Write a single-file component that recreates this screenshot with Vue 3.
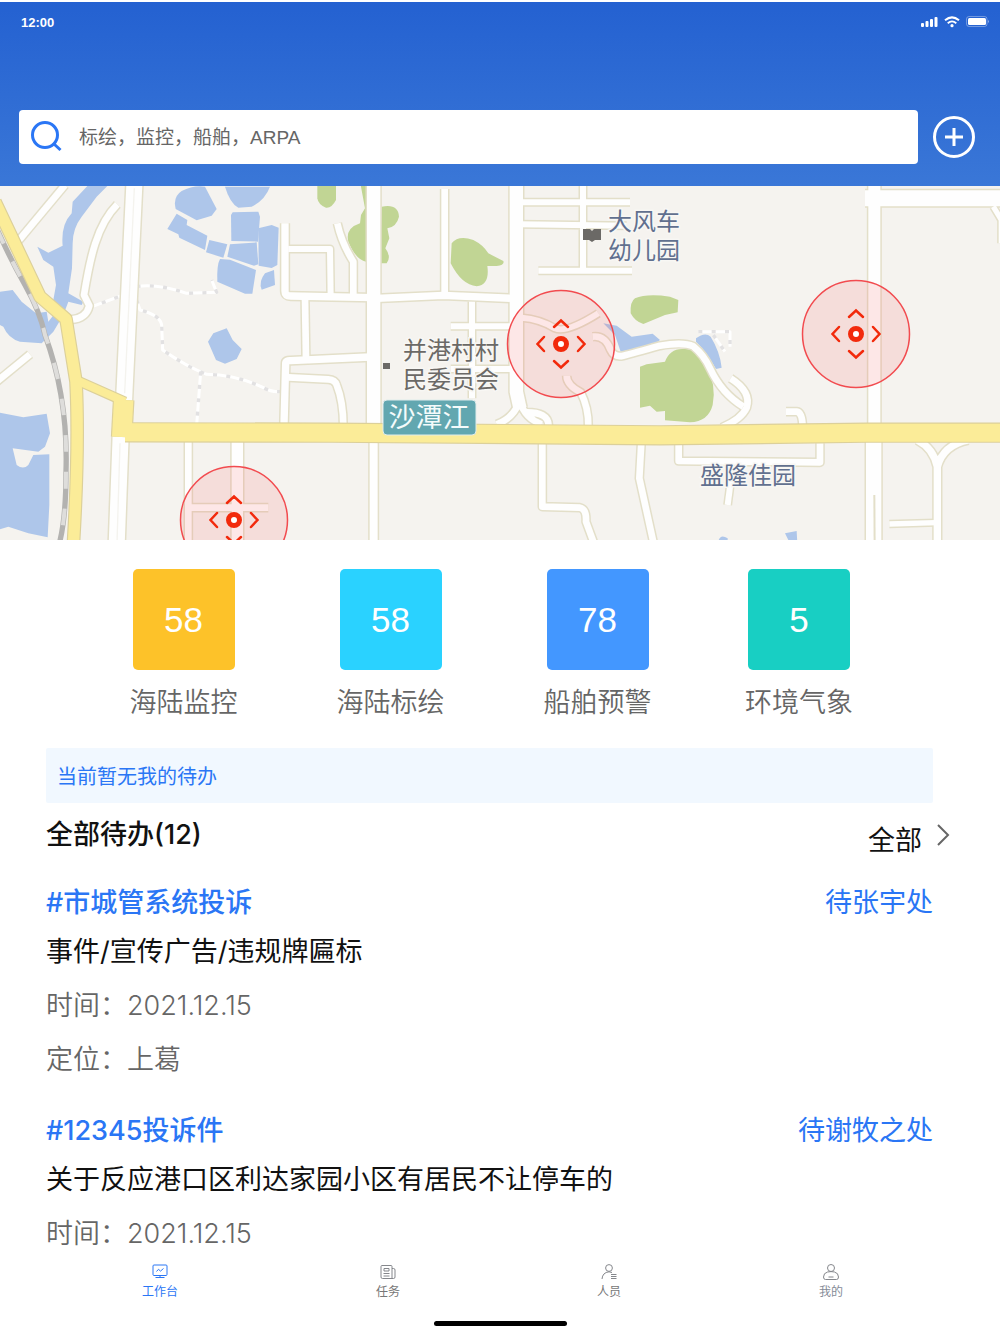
<script setup>
import { ref } from 'vue'

const keyword = ref('')
const activeTab = ref('work')

const stats = [
  { value: 58, label: '海陆监控', tone: 'amber' },
  { value: 58, label: '海陆标绘', tone: 'cyan' },
  { value: 78, label: '船舶预警', tone: 'blue' },
  { value: 5, label: '环境气象', tone: 'teal' }
]

const todos = [
  {
    tag: '#市城管系统投诉',
    handler: '待张宇处',
    title: '事件/宣传广告/违规牌匾标',
    meta: ['时间：2021.12.15', '定位：上葛']
  },
  {
    tag: '#12345投诉件',
    handler: '待谢牧之处',
    title: '关于反应港口区利达家园小区有居民不让停车的',
    meta: ['时间：2021.12.15']
  }
]

const tabs = [
  { id: 'work', label: '工作台' },
  { id: 'task', label: '任务' },
  { id: 'staff', label: '人员' },
  { id: 'mine', label: '我的' }
]

const cameras = [
  { x: 561, y: 344 },
  { x: 856, y: 334 },
  { x: 234, y: 520 }
]

// Road centre lines, drawn twice: casing first, then surface.
const roads = [
  { w: 48, d: 'M403 0 L372 650 M362 750 L350 1080' },
  { w: 20, d: 'M195 0 L55 168' },
  { w: 20, d: 'M352 58 C290 120 270 220 252 330 L268 362 C262 388 245 402 212 404' },
  { w: 20, d: 'M-10 590 L90 508' },
  { w: 22, d: 'M855 115 V318 Q855 333 872 333 L1120 338' },
  { w: 18, d: 'M865 192 H990 L992 335' },
  { w: 20, d: 'M915 340 L918 525' },
  { w: 22, d: 'M852 720 L857 535 Q857 526 872 527 L1110 516' },
  { w: 20, d: 'M866 577 L985 583 Q1005 584 1010 600 Q1030 650 1030 725' },
  { w: 20, d: 'M1012 115 Q1025 175 1060 230 V330' },
  { w: 40, d: 'M1121 0 V720' },
  { w: 24, d: 'M1121 770 V1080' },
  { w: 22, d: 'M1130 340 L1330 331 L1535 340' },
  { w: 20, d: 'M1334 12 V330' },
  { w: 40, d: 'M1549 0 V620 L1560 670' },
  { w: 20, d: 'M1558 650 Q1540 700 1490 718 M1560 650 Q1575 700 1625 718 M1575 682 Q1645 680 1646 722' },
  { w: 18, d: 'M1416 350 V640 M1352 424 H1535 M1352 552 H1535' },
  { w: 18, d: 'M1560 52 H1890 M1560 118 L1880 122 M1749 0 V250 M1615 257 H1896' },
  { w: 18, d: 'M1565 398 Q1620 402 1665 430 Q1700 445 1795 385' },
  { w: 20, d: 'M1778 455 Q1815 450 1832 495 Q1842 518 1870 512 Q1900 505 1980 482 Q2050 470 2080 484 Q2112 510 2130 550 Q2165 625 2230 665' },
  { w: 20, d: 'M2192 580 Q2255 620 2240 668 Q2225 702 2165 728' },
  { w: 20, d: 'M1700 572 Q1700 600 1742 622 Q1766 668 1765 725' },
  { w: 20, d: 'M2358 680 H2390 Q2408 682 2408 730' },
  { w: 36, d: 'M2623 0 V720' },
  { w: 48, d: 'M2595 40 H3010' },
  { w: 16, d: 'M2980 65 L3004 105 V175' },
  { w: 46, d: 'M2621 770 V1080' },
  { w: 20, d: 'M2036 775 V828 L2460 832 V775' },
  { w: 18, d: 'M2192 890 L2183 960' },
  { w: 22, d: 'M2752 765 Q2800 790 2812 845 V1080 M2905 765 Q2830 780 2812 845' },
  { w: 16, d: 'M2668 1017 L2808 1013' },
  { w: 20, d: 'M1627 772 V965 L1740 968 Q1760 972 1758 1010 L1782 1075' },
  { w: 20, d: 'M1924 772 L1918 880 L1962 1080' },
  { w: 20, d: 'M565 765 V1080 M570 968 H805' },
  { w: 34, d: 'M712 765 V1080' }
]

const mainRoads = [
  { w: 34, d: 'M-15 50 L120 335 L198 402 L228 590 Q238 780 220 1080' },
  { w: 24, d: 'M235 588 L375 650' },
  { w: 58, d: 'M371 645 L365 756' },
  { w: 54, d: 'M375 742 L990 743 L1980 751 L2600 743 H3010' }
]

const trails = [
  'M268 368 L370 330 M410 305 Q470 295 560 325 L650 322 L635 285',
  'M410 345 L420 375 Q480 390 485 420 L488 495 Q560 545 620 568 Q710 570 790 608 Q820 625 850 618 M602 560 L590 720',
  'M2095 440 H2190 V485 M2140 450 L2175 500'
]

const waters = [
  'M265 0 H325 L290 35 L245 95 Q218 130 218 175 L216 250 L205 325 L250 350 L245 360 L205 350 L190 390 L160 440 L125 475 L60 470 Q25 460 10 425 L0 420 V320 L38 315 L65 350 L108 385 L140 380 L145 410 L165 385 L160 345 L168 300 L160 245 L130 225 L112 185 L145 203 L188 182 Q182 120 215 85 L218 50 Z',
  'M545 18 Q580 0 615 5 L650 72 L635 92 L590 106 L527 72 Q518 35 545 18 Z',
  'M675 5 H810 Q795 45 755 65 L715 68 Q690 55 675 5 Z',
  'M530 86 L562 105 L560 120 L622 152 L615 195 L538 158 L535 148 L502 132 Z',
  'M628 165 L682 178 L670 218 L618 202 Z',
  'M698 82 L775 80 L780 95 L774 170 L694 168 L693 90 Z',
  'M775 130 L815 120 L836 128 L832 240 L815 249 L776 242 Z',
  'M690 178 L770 172 L775 238 L762 242 L682 215 Z',
  'M660 222 L690 224 L768 255 L757 326 L735 326 L652 290 Q650 240 660 222 Z',
  'M795 265 L822 255 L825 300 L785 314 Q775 290 795 265 Z',
  'M640 445 L680 430 L698 465 L725 492 L710 522 L675 536 L648 525 L624 470 Z',
  'M0 683 L70 697 L140 686 L150 745 L135 785 L115 800 L38 790 L50 840 Q70 855 85 840 L100 810 L148 808 L148 960 L143 1057 L85 1045 L25 1025 L0 1033 Z',
  'M1810 415 L1850 422 L1895 455 L1958 446 L1980 465 L1960 480 L1862 500 L1845 450 Z',
  'M2088 460 Q2115 440 2132 455 Q2160 500 2165 548 L2148 552 Q2120 500 2088 470 Z',
  'M2155 1070 Q2160 1045 2183 1060 V1075 Z M2355 1045 L2390 1038 L2392 1075 H2370 Z'
]

const woods = [
  'M952 0 H1008 V45 Q995 70 978 68 Q955 60 952 40 Z',
  'M1082 0 H1098 V230 Q1068 225 1045 170 Q1035 130 1080 115 L1083 90 L1095 70 Z',
  'M1145 65 Q1195 55 1197 95 Q1190 125 1162 130 L1168 160 L1156 190 Q1175 215 1160 235 L1140 235 Z',
  'M1355 175 Q1375 150 1420 165 Q1450 180 1465 205 L1510 228 Q1515 240 1490 243 L1462 243 Q1470 300 1430 304 Q1385 300 1352 235 Z',
  'M1905 340 Q1940 325 2010 335 L2035 345 L2033 382 L1995 390 L1930 417 Q1905 410 1892 385 Q1890 350 1905 340 Z',
  'M1920 545 L1940 538 L1995 530 Q2010 490 2050 492 Q2095 490 2120 545 Q2150 600 2138 660 Q2125 710 2070 712 L1995 706 V678 L1970 680 L1950 662 L1920 668 Z'
]
</script>

<template>
  <div class="app">
    <header class="header">
      <div class="status">
        <span>12:00</span>
        <svg class="status-icons" viewBox="0 0 68 12" aria-hidden="true">
          <g fill="#fff">
            <rect x="0" y="7" width="3" height="4" rx="1" />
            <rect x="4.500" y="5" width="3" height="6" rx="1" />
            <rect x="9" y="3" width="3" height="8" rx="1" />
            <rect x="13.500" y="1" width="3" height="10" rx="1" />
            <rect x="47" y="2" width="18" height="7" rx="1.500" />
            <path d="M67 4 Q69 5.500 67 7Z" opacity=".5" />
            <circle cx="31" cy="9.700" r="1.600" />
          </g>
          <g fill="none" stroke="#fff">
            <path d="M24 4.300 Q31 -1.600 38 4.300" stroke-width="2" />
            <path d="M26.700 7.200 Q31 3.600 35.300 7.200" stroke-width="1.800" />
            <rect x="45.500" y=".5" width="20.500" height="10" rx="2.500" opacity=".35" />
          </g>
        </svg>
      </div>
      <div class="search-row">
        <label class="search">
          <svg class="search-icon" viewBox="0 0 32 32" aria-hidden="true">
            <circle cx="14" cy="14" r="12.500" />
            <path d="M22.500 22.500 L29.500 29" />
          </svg>
          <input v-model="keyword" type="text" aria-label="搜索" placeholder="标绘，监控，船舶，ARPA" />
        </label>
        <button class="add" type="button" aria-label="新增">
          <svg viewBox="0 0 44 44" aria-hidden="true">
            <circle cx="22" cy="22" r="19.500" />
            <path d="M13 22 H31 M22 13 V31" />
          </svg>
        </button>
      </div>
    </header>

    <svg class="map" viewBox="0 186 1000 354" preserveAspectRatio="xMidYMid slice">
      <g transform="translate(0 185) scale(.33333)">
        <path v-for="d in waters" :key="d" :d="d" class="water" />
        <path v-for="d in woods" :key="d" :d="d" class="wood" />
        <path class="rail" d="M-10 130 Q30 220 75 300 Q120 380 135 450 Q205 640 198 860 Q198 1000 178 1075" />
        <path class="rail-gap" d="M-10 130 Q30 220 75 300 Q120 380 135 450 Q205 640 198 860 Q198 1000 178 1075" />
        <g v-for="trail in trails" :key="trail">
          <path class="trail" :d="trail" />
          <path class="trail-dash" :d="trail" />
        </g>
        <path v-for="r in roads" :key="'c' + r.d" class="road casing" :d="r.d" :stroke-width="r.w + 9" />
        <path v-for="r in roads" :key="'s' + r.d" class="road surface" :d="r.d" :stroke-width="r.w" />
        <path class="road casing" stroke-width="6" d="M2623 930 L2624 1080" />
        <path class="lane" d="M403 10 L374 625 M360 775 L351 1075" />
        <path v-for="r in mainRoads" :key="'mc' + r.d" class="road main-casing" :d="r.d" :stroke-width="r.w + 7" />
        <path v-for="r in mainRoads" :key="'ms' + r.d" class="road main-surface" :d="r.d" :stroke-width="r.w" />
      </g>
      <g class="place navy">
        <text x="608" y="230">大风车</text>
        <text x="608" y="259">幼儿园</text>
        <text x="700" y="484">盛隆佳园</text>
      </g>
      <g class="place grey">
        <text x="403" y="359">并港村村</text>
        <text x="403" y="388">民委员会</text>
      </g>
      <path fill="#6b6966" d="M583 229 L590 229 L592 231 L594 229 L601 229 V240 H595 L592 242 L589 240 H583 Z" />
      <rect x="383" y="363" width="7" height="6" fill="#6b6966" />
      <rect class="badge" x="383" y="400" width="93" height="35" rx="4" />
      <text class="badge-text" x="429" y="427">沙潭江</text>
      <g v-for="c in cameras" :key="c.x" :transform="`translate(${c.x} ${c.y})`">
        <circle class="range" r="53.500" />
        <circle class="lens" r="5.500" />
        <path class="arrows" d="M-7 -17 L0 -23.500 L7 -17 M-7 17 L0 23.500 L7 17 M-17 -7 L-23.500 0 L-17 7 M17 -7 L23.500 0 L17 7" />
      </g>
    </svg>

    <main>
      <section class="stats">
        <div v-for="s in stats" :key="s.label" class="stat">
          <div class="tile" :class="s.tone">{{ s.value }}</div>
          <div class="stat-label">{{ s.label }}</div>
        </div>
      </section>

      <section class="todos">
        <p class="notice">当前暂无我的待办</p>
        <div class="todo-head">
          <h2>全部待办(12)</h2>
          <a class="all" href="#all">
            全部
            <svg viewBox="0 0 14 24" aria-hidden="true"><path d="M2 2 L12 12 L2 22" /></svg>
          </a>
        </div>
        <article v-for="t in todos" :key="t.tag" class="todo">
          <div class="todo-top">
            <h3>{{ t.tag }}</h3>
            <span>{{ t.handler }}</span>
          </div>
          <p class="todo-title">{{ t.title }}</p>
          <p v-for="m in t.meta" :key="m" class="todo-meta">{{ m }}</p>
        </article>
      </section>
    </main>

    <nav class="tabbar">
      <div class="tabs">
        <button
          v-for="tab in tabs"
          :key="tab.id"
          type="button"
          class="tab"
          :class="[tab.id, { active: activeTab === tab.id }]"
          @click="activeTab = tab.id"
        >
          <svg viewBox="0 0 16 16" aria-hidden="true">
            <template v-if="tab.id === 'work'">
              <rect x="1" y="1" width="14" height="10.500" rx="1" />
              <path d="M4.500 7.500 L6.500 5.300 L8.500 7.100 L11.500 4.500 M8 11.500 V13.500 M3.500 13.500 H12.500" />
            </template>
            <template v-else-if="tab.id === 'task'">
              <path d="M12 14.500 H2.500 Q1 14.500 1 13 V2.500 Q1 1.500 2 1.500 H11 Q12 1.500 12 2.500 Z M12 4.500 H13.500 Q15 4.500 15 6 V13 Q15 14.500 13.500 14.500 H12" />
              <path d="M4 4.500 H9 V7 H4 Z M3.500 9.500 H9.500 M3.500 12 H9.500" />
            </template>
            <template v-else-if="tab.id === 'staff'">
              <circle cx="8" cy="4" r="3.400" />
              <path d="M1 15 Q1.500 8.500 8 7.800 L11 8.500 M10 10.500 H15.500 M10 12.500 H15.500 M10 14.500 H15.500" />
            </template>
            <template v-else>
              <circle cx="8" cy="4" r="3.500" />
              <path d="M4.500 8 Q8 7.200 11.500 8 Q15.500 9 15.500 13 Q15.500 15.500 13.500 15.500 H2.500 Q.5 15.500 .5 13 Q.5 9 4.500 8 Z M5.500 13 H10.500" />
            </template>
          </svg>
          <span>{{ tab.label }}</span>
        </button>
      </div>
      <div class="home-indicator"></div>
    </nav>
  </div>
</template>

<style>
body {
  margin: 0;
  background: #fff;
}
</style>

<style scoped>
.app {
  box-sizing: border-box;
  display: flex;
  flex-direction: column;
  min-height: 100vh;
  padding-top: 2px;
  background: #fff;
  color: #111;
  font-family: Inter, "Noto Sans CJK SC", sans-serif;
}

h2,
h3,
p {
  margin: 0;
}

button {
  padding: 0;
  border: 0;
  background: none;
  font: inherit;
}

.header {
  padding-bottom: 22px;
  background: linear-gradient(#2461d1, #3a77d7);
}

.status {
  display: flex;
  align-items: center;
  justify-content: space-between;
  height: 40px;
  margin-bottom: 68px;
  padding: 0 11px 0 21px;
  color: #fff;
  font: bold 13px "Liberation Sans", sans-serif;
}

.status-icons {
  width: 68px;
  height: 12px;
}

.search-row {
  display: flex;
  align-items: center;
  gap: 14px;
  padding: 0 24px 0 19px;
}

.search {
  display: flex;
  flex: 1;
  align-items: center;
  gap: 16px;
  height: 54px;
  padding: 0 12px;
  border-radius: 4px;
  background: #fff;
}

.search-icon {
  width: 32px;
  height: 32px;
  fill: none;
  stroke: #2a76f5;
  stroke-width: 3;
}

.search input {
  flex: 1;
  min-width: 0;
  padding: 2px 0 0;
  border: 0;
  outline: 0;
  background: none;
  color: #666;
  font: 19px "Liberation Sans", "Noto Sans CJK SC", sans-serif;
}

.search input::placeholder {
  color: #666;
  opacity: 1;
}

.add svg {
  display: block;
  width: 44px;
  height: 44px;
  fill: none;
  stroke: #fff;
  stroke-width: 3;
}

.map {
  display: block;
  width: 100%;
  height: 354px;
  background: #f5f3ef;
}

.water {
  fill: #aec6ea;
}

.wood {
  fill: #c1d594;
}

.road,
.lane,
.rail,
.rail-gap,
.trail,
.trail-dash {
  fill: none;
  stroke-linejoin: round;
}

.casing {
  stroke: #e3dfc9;
}

.surface {
  stroke: #fefefe;
}

.lane {
  stroke: #f4f3ee;
  stroke-width: 4;
}

.main-casing {
  stroke: #dcd09a;
}

.main-surface {
  stroke: #fbec98;
}

.rail {
  stroke: #b3b2b0;
  stroke-width: 16;
}

.rail-gap {
  stroke: #dedddb;
  stroke-width: 12;
  stroke-dasharray: 50 60;
}

.trail {
  stroke: #fff;
  stroke-width: 9;
}

.trail-dash {
  stroke: #e2e1e2;
  stroke-width: 10;
  stroke-dasharray: 12 28;
}

.place {
  font-family: "Liberation Sans", "Noto Sans CJK SC", sans-serif;
  font-size: 24px;
  font-weight: 400;
  paint-order: stroke;
  stroke: #f8f7f4;
  stroke-width: 3px;
}

.navy {
  fill: #61708f;
}

.grey {
  fill: #6b6966;
}

.badge {
  fill: #62a7b0;
  stroke: #dfeceb;
}

.badge-text {
  fill: #f4fbfb;
  font-family: "Liberation Sans", "Noto Sans CJK SC", sans-serif;
  font-size: 27px;
  text-anchor: middle;
}

.range {
  fill: rgb(245 80 80 / 13%);
  stroke: #f24b4f;
  stroke-width: 1.5;
}

.lens {
  fill: #fff;
  stroke: #f22a0c;
  stroke-width: 5;
}

.arrows {
  fill: none;
  stroke: #f22a0c;
  stroke-width: 2.5;
  stroke-linecap: round;
}

.stats {
  display: grid;
  grid-template-columns: 207fr 207fr 207fr 196fr;
  padding: 29px 103px 0 80px;
}

.stat {
  display: flex;
  flex-direction: column;
  align-items: center;
  gap: 13px;
}

.tile {
  width: 102px;
  height: 101px;
  border-radius: 5px;
  color: #fff;
  font: 35px/101px "Liberation Sans", sans-serif;
  text-align: center;
}

.amber {
  background: #fdc229;
}

.cyan {
  background: #2ad2ff;
}

.blue {
  background: #4397ff;
}

.teal {
  background: #18cfc3;
}

.stat-label {
  color: #666;
  font-size: 27px;
  font-weight: 350;
  line-height: 40px;
}

.todos {
  padding: 25px 67px 0 46px;
}

.notice {
  padding: 3px 0 0 11px;
  border-radius: 2px;
  background: #f1f8ff;
  color: #2a76f5;
  font-size: 20px;
  line-height: 52px;
}

.todo-head {
  display: flex;
  justify-content: space-between;
  height: 78px;
  font-size: 27px;
}

.todo-head h2 {
  font-size: 27px;
  font-weight: 500;
  line-height: 64px;
}

.all {
  display: flex;
  gap: 14px;
  margin-right: -17px;
  color: #111;
  line-height: 76px;
  text-decoration: none;
}

.all svg {
  width: 14px;
  height: 24px;
  margin-top: 20px;
  fill: none;
  stroke: #666;
  stroke-width: 2;
}

.todo {
  font-size: 27px;
}

.todo + .todo {
  margin-top: 22px;
}

.todo-top {
  display: flex;
  justify-content: space-between;
  color: #2a76f5;
  line-height: 44px;
}

.todo-top h3 {
  font-size: 27px;
  font-weight: 500;
}

.todo-title,
.todo-meta {
  line-height: 54px;
}

.todo-meta {
  color: #666;
  font-weight: 350;
}

.tabbar {
  position: sticky;
  bottom: 0;
  display: flex;
  flex-direction: column;
  justify-content: space-between;
  box-sizing: border-box;
  height: 72px;
  margin-top: auto;
  padding: 2px 0 8px;
  background: #fff;
}

.tabs {
  display: grid;
  grid-template-columns: 232fr 224fr 218fr 226fr;
  padding: 0 56px 0 44px;
}

.tab {
  display: flex;
  flex-direction: column;
  align-items: center;
  gap: 3px;
  color: #777;
  font-size: 12px;
  line-height: 18px;
}

.tab svg {
  width: 16px;
  height: 16px;
  fill: none;
  stroke: #85878c;
  stroke-width: 1;
}

.tab.mine {
  color: #858b97;
}

.tab.active {
  color: #2a76f5;
}

.tab.active svg {
  stroke: #2a76f5;
}

.home-indicator {
  align-self: center;
  width: 133px;
  height: 5px;
  border-radius: 3px;
  background: #000;
}
</style>
